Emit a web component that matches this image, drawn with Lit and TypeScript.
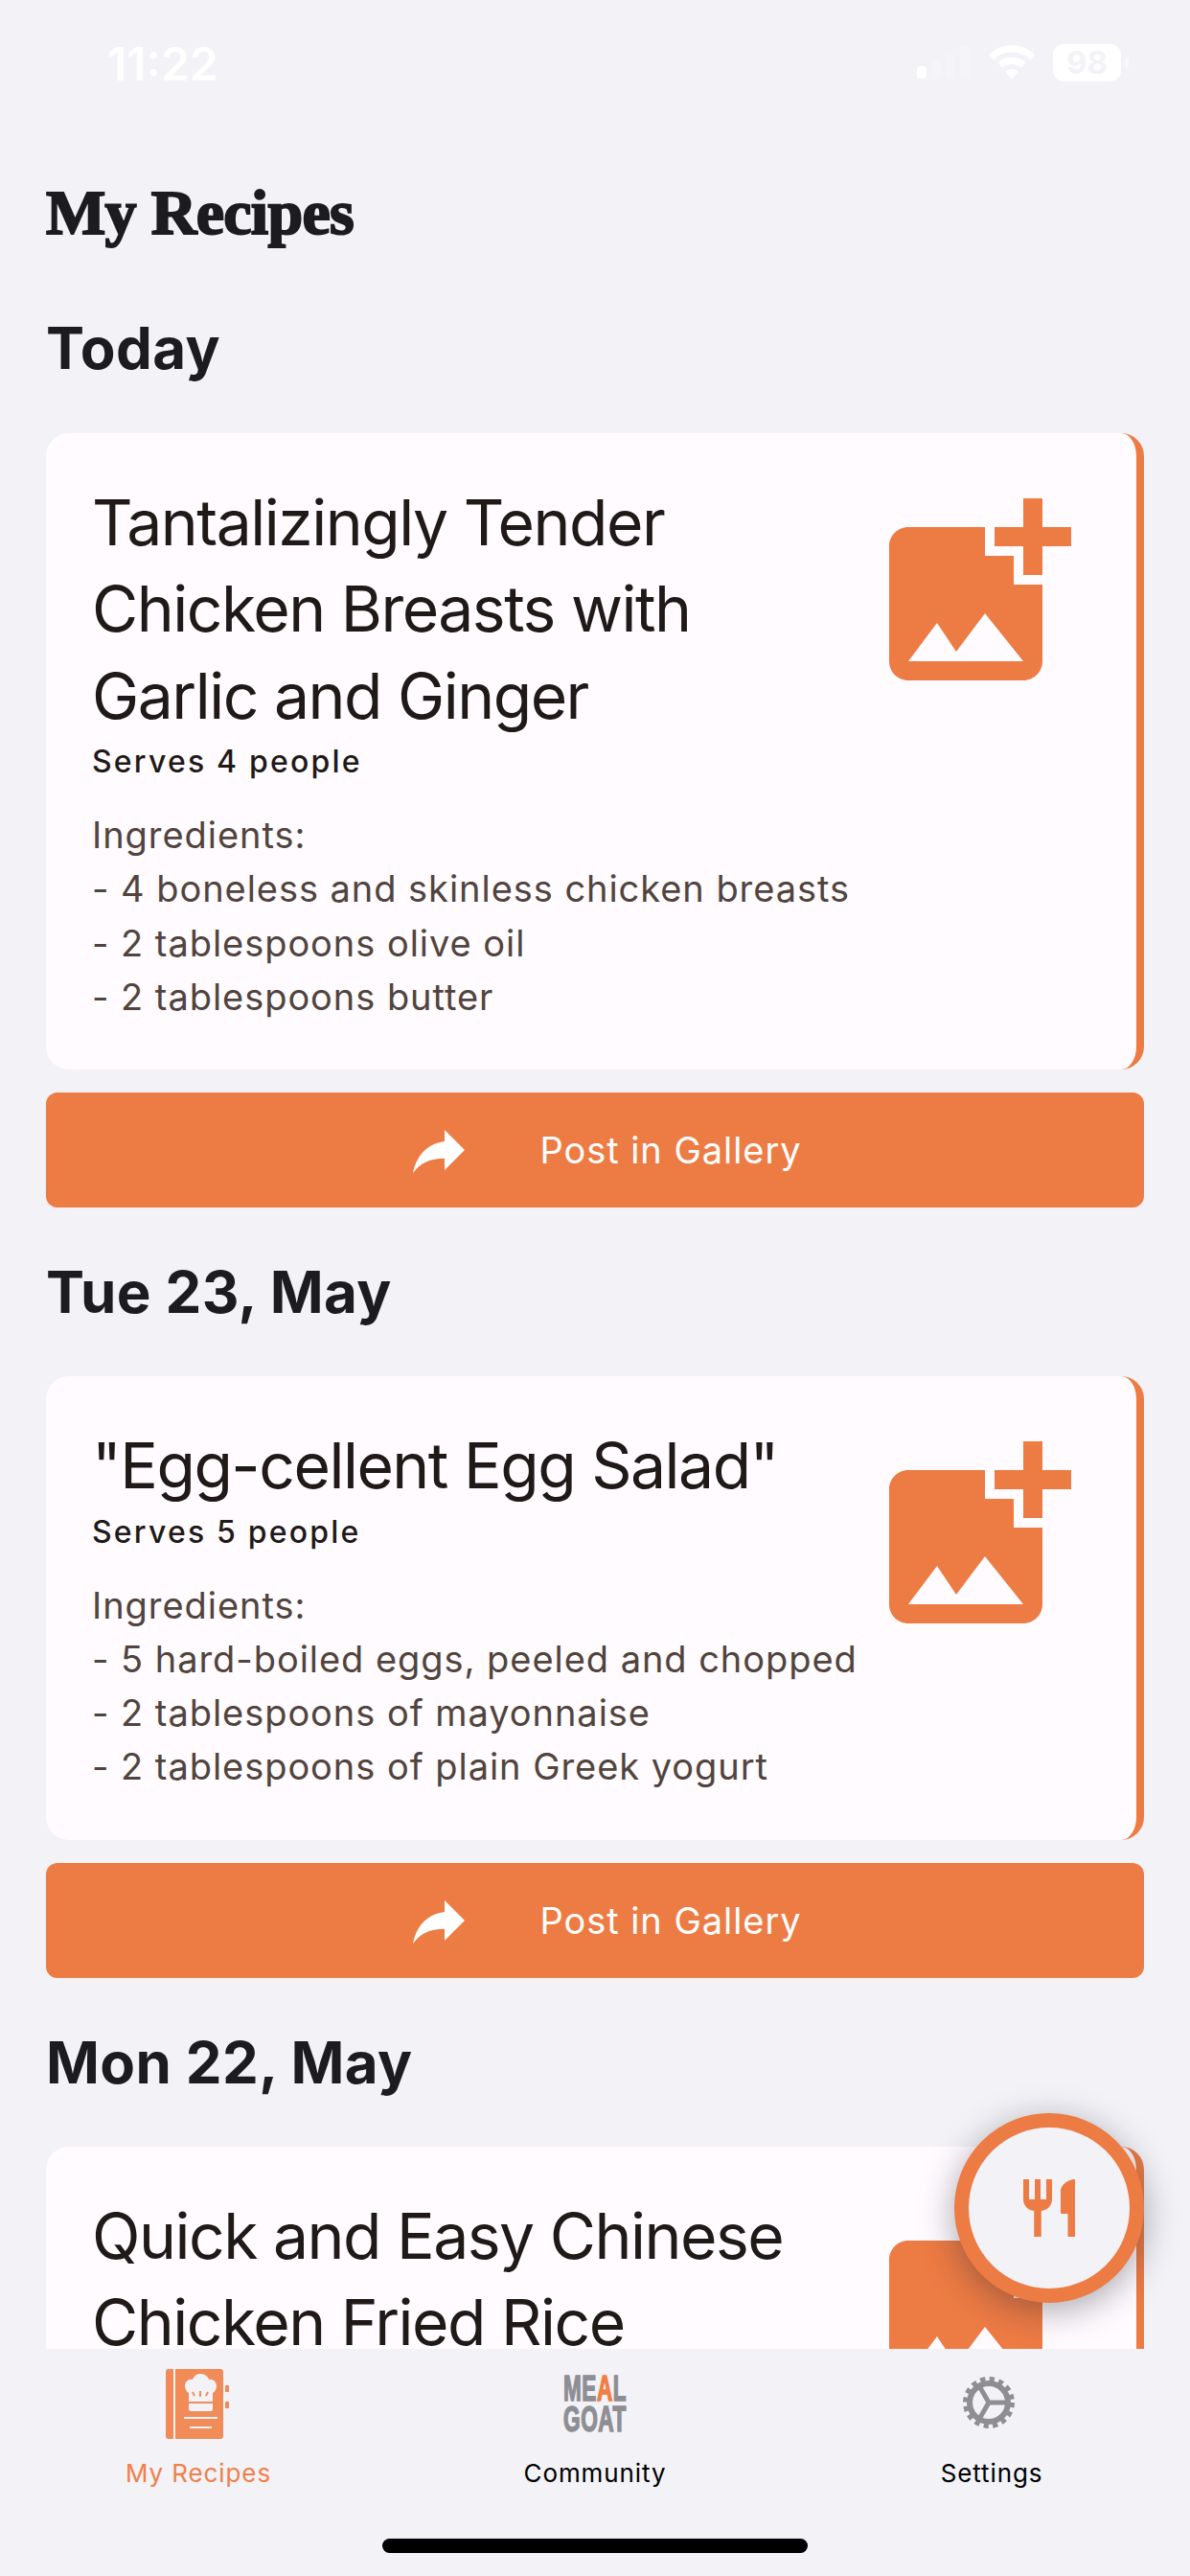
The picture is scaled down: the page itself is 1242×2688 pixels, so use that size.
import { LitElement, html, css, svg } from "lit";
import { customElement } from "lit/decorators.js";

interface Recipe { date: string; title: string[]; serves?: number; lines?: string[]; }

const RECIPES: Recipe[] = [
  { date: "Today", title: ["Tantalizingly Tender", "Chicken Breasts with", "Garlic and Ginger"], serves: 4,
    lines: ["Ingredients:", "- 4 boneless and skinless chicken breasts", "- 2 tablespoons olive oil", "- 2 tablespoons butter"] },
  { date: "Tue 23, May", title: ['"Egg-cellent Egg Salad"'], serves: 5,
    lines: ["Ingredients:", "- 5 hard-boiled eggs, peeled and chopped", "- 2 tablespoons of mayonnaise", "- 2 tablespoons of plain Greek yogurt"] },
  { date: "Mon 22, May", title: ["Quick and Easy Chinese", "Chicken Fried Rice"] },
];

const addPhoto = svg`<path d="M19 7v2.99s-1.99.01-2 0V7h-3s.01-1.99 0-2h3V2h2v3h3v2h-3zm-3 4V8h-3V5H5c-1.1 0-2 .9-2 2v12c0 1.1.9 2 2 2h12c1.1 0 2-.9 2-2v-8h-3zM5 19l3-4 2 3 3-4 4 5H5z"/>`;

@customElement("app-root")
export class AppRoot extends LitElement {
  static styles = css`
    :host { --orange: #ed7b44; display: flex; flex-direction: column; position: relative; width: 1242px; height: 2688px; overflow: hidden;
      background: #f2f2f7; font-family: Inter, "Liberation Sans", sans-serif; color: #1c1b1f; }
    .status { flex: none; height: 177px; display: flex; justify-content: space-between; color: #fff; box-sizing: border-box; padding: 38px 72px 0 112px; }
    .time { font-size: 48px; font-weight: 600; line-height: 58px; }
    .sicons { display: flex; align-items: flex-start; padding-top: 9px; }
    .signal { display: flex; align-items: flex-end; gap: 5px; height: 34px; margin: 1px 20px 0 0; }
    .signal i { width: 10px; border-radius: 3px; background: #fff; opacity: .22; }
    .signal i:first-child { opacity: 1; }
    .batt { position: relative; width: 71px; height: 39px; margin-left: 19px; margin-top: -1px; border-radius: 11px; background: #fff; color: #f2f2f7;
      font-size: 33px; font-weight: 700; line-height: 39px; text-align: center; }
    .nub { position: absolute; left: 75px; top: 13px; width: 4px; height: 13px; border-radius: 0 4px 4px 0; background: #fff; opacity: .5; }
    .scroll { flex: 1; min-height: 0; overflow: hidden; padding: 0 48px; }
    h1 { margin: 0; font: 700 66px/90px "Liberation Serif", serif; letter-spacing: -0.7px; -webkit-text-stroke: 2px #1c1b1f; color: #1c1b1f; height: 90px; }
    h2 { margin: 0; font-size: 60px; font-weight: 700; line-height: 80px; padding: 48px 0; letter-spacing: .4px; color: #1c1b1f; }
    h1 + section h2 { padding: 47px 0 49px; margin-top: 9px; }
    .card { display: flex; justify-content: space-between; align-items: flex-start; box-sizing: border-box; padding: 48px; border-right: 8px solid var(--orange); border-radius: 24px; background: #fffbff; }
    .text { flex: 1; min-width: 0; }
    .title { margin: 0; font-size: 66px; line-height: 90.4px; font-weight: 400; letter-spacing: -1.5px; color: #1f1a18; white-space: nowrap; }
    .serves { margin: 0 0 24px; font-size: 32px; line-height: 48px; font-weight: 500; letter-spacing: 2.2px; color: #1f1a18; }
    .lines { margin: 0; font-size: 38px; line-height: 56.25px; letter-spacing: .95px; color: #51443d; white-space: nowrap; }
    .add { width: 240px; height: 240px; flex: none; fill: var(--orange); display: block; }
    .post { display: flex; align-items: center; justify-content: center; gap: 69px; height: 120px; margin-top: 24px; padding-left: 17px; border-radius: 12px;
      background: var(--orange); color: #fff; font-size: 38px; letter-spacing: .95px; }
    .post svg { width: 72px; height: 72px; fill: #fff; display: block; }
    .tabs { flex: none; height: 237px; background: #f2f2f7; display: grid; grid-template-columns: repeat(3, 1fr); position: relative; }
    .tab { display: flex; flex-direction: column; align-items: center; font-size: 26px; letter-spacing: .9px; color: #000; padding-top: 21px; }
    .tab.on { color: #f0804a; }
    .ticon { height: 74px; margin-bottom: 16px; display: block; }
    .label { line-height: 38px; }
    .home { position: absolute; left: 399px; bottom: 24px; width: 444px; height: 15px; border-radius: 8px; background: #000; }
    .fab { position: absolute; left: 996px; top: 2205px; width: 198px; height: 198px; box-sizing: border-box; border: 15px solid var(--orange); border-radius: 50%;
      background: #f2f2f7; display: flex; align-items: center; justify-content: center; box-shadow: 0 8px 36px rgba(40, 40, 50, .4); }
    .fab svg { width: 72px; height: 72px; fill: var(--orange); display: block; }
    .logo-t { font-family: "Liberation Sans", sans-serif; font-weight: 700; font-size: 37.500px; fill: #8e8e93; stroke: #8e8e93; stroke-width: 1.6; }
    .logo-a { fill: #ef7f45; stroke: #ef7f45; }
  `;

  private recipe(r: Recipe) {
    return html`<section>
      <h2>${r.date}</h2>
      <div class="card">
        <div class="text">
          <p class="title">${r.title.map((t, i) => (i ? html`<br />${t}` : t))}</p>
          ${r.serves
            ? html`<p class="serves">Serves ${r.serves} people</p>
                <p class="lines">${(r.lines ?? []).map((t, i) => (i ? html`<br />${t}` : t))}</p>`
            : ""}
        </div>
        <svg class="add" viewBox="0 0 24 24">${addPhoto}</svg>
      </div>
      ${r.serves
        ? html`<div class="post">
            <svg viewBox="0 0 24 24"><path d="M14 9V5l7 7-7 7v-4.1c-5 0-8.5 1.6-11 5.1 1-5 4-10 11-11z" /></svg>
            <span>Post in Gallery</span>
          </div>`
        : ""}
    </section>`;
  }

  render() {
    return html`
      <div class="status">
        <span class="time">11:22</span>
        <div class="sicons">
          <div class="signal"><i style="height:13px"></i><i style="height:19px"></i><i style="height:26px"></i><i style="height:34px"></i></div>
          <svg width="48" height="36" viewBox="0 0 48 36" fill="#fff">
            <path d="M24 0C15 0 7 3.500 0 10l4.500 5.500C10 10.500 16.500 7.500 24 7.500s14 3 19.500 8L48 10C41 3.500 33 0 24 0z" />
            <path d="M24 12.500c-5.500 0-10.500 2-14.500 5.800l4.700 5.500c2.700-2.500 6-3.800 9.800-3.800s7.100 1.300 9.800 3.800l4.700-5.500c-4-3.800-9-5.800-14.500-5.800z" />
            <path d="M24 25c-2.600 0-5 1-6.800 2.600L24 36l6.800-8.400C29 26 26.600 25 24 25z" />
          </svg>
          <div class="batt">98<span class="nub"></span></div>
        </div>
      </div>
      <div class="scroll">
        <h1>My Recipes</h1>
        ${RECIPES.map((r) => this.recipe(r))}
      </div>
      <div class="tabs">
        <div class="tab on">
          <svg class="ticon" width="68" height="74" viewBox="0 0 68 74">
            <path fill="#f18c58" d="M3 0h5v73H3a3 3 0 0 1-3-3V3a3 3 0 0 1 3-3zM10 0h47a3 3 0 0 1 3 3v67a3 3 0 0 1-3 3H10z" />
            <path fill="#f2f2f7" d="M36 5c5 0 8 3 9 6 4-1 8 2 8 7 0 3-2 6-4 7v9H24v-9c-2-1-4-4-4-7 0-5 4-8 8-7 1-3 4-6 8-6zM24 36h25v6a2 2 0 0 1-2 2H26a2 2 0 0 1-2-2z" />
            <path stroke="#f18c58" stroke-width="2" fill="none" d="M36 23v6M28 24l2 4M44 24l-2 4" />
            <path stroke="#f2f2f7" stroke-width="2" d="M19 51h35M25 61h23" />
            <path fill="#f18c58" d="M62 17h4v7h-4zM62 34h4v7h-4z" />
          </svg>
          <span class="label">My Recipes</span>
        </div>
        <div class="tab">
          <svg class="ticon" width="68" height="74" viewBox="0 0 68 74">
            <text class="logo-t" y="33" x="1" textLength="66" lengthAdjust="spacingAndGlyphs">ME<tspan class="logo-a">A</tspan>L</text>
            <text class="logo-t" y="65" x="1" textLength="66" lengthAdjust="spacingAndGlyphs">GOAT</text>
          </svg>
          <span class="label">Community</span>
        </div>
        <div class="tab">
          <svg class="ticon" width="68" height="74" viewBox="0 0 68 74">
            <g transform="translate(31 35)" fill="none" stroke="#8e8e93">
              <circle r="20" stroke-width="6" />
              <circle r="24.500" stroke-width="5" stroke-dasharray="5.200 4.420" />
              <path stroke-width="5" d="M0 0H20M0 0L-10 17.300M0 0L-10 -17.300" />
            </g>
          </svg>
          <span class="label">Settings</span>
        </div>
        <div class="home"></div>
      </div>
      <div class="fab">
        <svg viewBox="0 0 24 24"><path d="M11 9H9V2H7v7H5V2H3v7c0 2.120 1.660 3.840 3.750 3.970V22h2.500v-9.030C11.340 12.840 13 11.120 13 9V2h-2v7zm5-3v8h2.500v8H21V2c-2.760 0-5 2.240-5 4z" /></svg>
      </div>
    `;
  }
}
